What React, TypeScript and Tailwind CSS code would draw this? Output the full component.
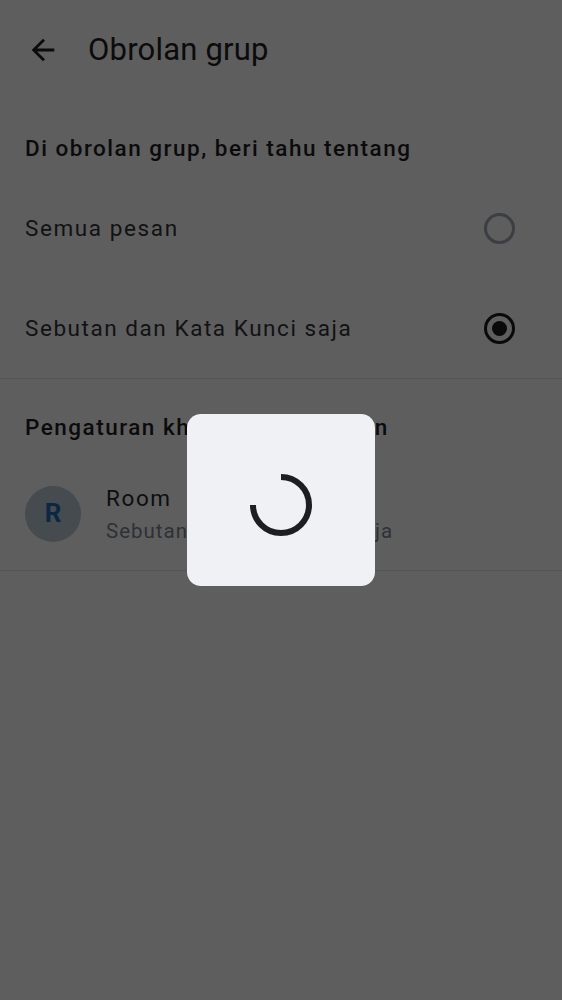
import React from "react";

function Radio({ checked }: { checked: boolean }) {
    return (
        <div
            className={
                "w-[31px] h-[31px] rounded-full border-[3px] flex items-center justify-center " +
                (checked ? "border-[#0a0a0b]" : "border-[#3b3e43]")
            }
        >
            {checked && <div className="w-[15px] h-[15px] rounded-full bg-[#0a0a0b]" />}
        </div>
    );
}

function Spinner() {
    // 270deg arc, from 12 o'clock clockwise to 9 o'clock
    return (
        <svg width="64" height="64" viewBox="0 0 64 64">
            <path
                d="M32 4 A28 28 0 1 1 4 32"
                fill="none"
                stroke="#1d1e22"
                strokeWidth="6"
                strokeLinecap="butt"
            />
        </svg>
    );
}

export default function App() {
    return (
        <div
            className="relative w-full min-h-[1000px] bg-[#5e5e5e] text-[#0b0b0c]"
            style={{ fontFamily: "Roboto, 'Noto Sans', sans-serif" }}
        >
            {/* header */}
            <div className="h-[100px] flex items-center">
                <button className="ml-[26px] w-[34px] h-[34px] flex items-center justify-center">
                    <svg width="34" height="34" viewBox="0 0 24 24" fill="#0b0b0c">
                        <path d="M20 11H7.83l5.59-5.59L12 4l-8 8 8 8 1.41-1.41L7.83 13H20v-2z" />
                    </svg>
                </button>
                <h1 className="ml-[28px] text-[31px] leading-[40px] tracking-[0.2px]">Obrolan grup</h1>
            </div>

            {/* group notifications */}
            <div className="px-[25px] pt-[36px] pb-[18px]">
                <h2 className="text-[22.5px] leading-[24px] font-medium tracking-[1.5px]">Di obrolan grup, beri tahu tentang</h2>
            </div>
            <div className="h-[100px] flex items-center justify-between pl-[25px] pr-[47px]">
                <span className="text-[22.5px] leading-[28px] text-[#111214] tracking-[1.6px]">Semua pesan</span>
                <Radio checked={false} />
            </div>
            <div className="h-[100px] flex items-center justify-between pl-[25px] pr-[47px]">
                <span className="text-[22.5px] leading-[28px] text-[#111214] tracking-[1.55px]">Sebutan dan Kata Kunci saja</span>
                <Radio checked={true} />
            </div>
            <div className="h-px bg-[#555555]" />

            {/* per room */}
            <div className="px-[25px] pt-[36px] pb-[18px]">
                <h2 className="text-[22.5px] leading-[24px] font-medium tracking-[1.5px]">Pengaturan khusus per ruangan</h2>
            </div>
            <div className="h-[113px] flex items-center px-[25px] gap-[25px]">
                <div className="w-[56px] h-[56px] rounded-full bg-[#454b4e] flex items-center justify-center">
                    <span className="text-[26px] font-bold text-[#0b2742]">R</span>
                </div>
                <div className="flex flex-col gap-[4px]">
                    <span className="text-[22.5px] leading-[30px] text-[#0d0e10] tracking-[1.6px]">Room</span>
                    <span className="text-[20.5px] leading-[28px] text-[#2e3136] tracking-[1px]">Sebutan dan Kata Kunci saja</span>
                </div>
            </div>
            <div className="h-px bg-[#555555]" />

            {/* loading dialog */}
            <div className="absolute left-[187px] top-[414px] w-[188px] h-[172px] rounded-[14px] bg-[#f0f1f5] flex items-center justify-center">
                <div className="mt-[10px]">
                    <Spinner />
                </div>
            </div>
        </div>
    );
}
